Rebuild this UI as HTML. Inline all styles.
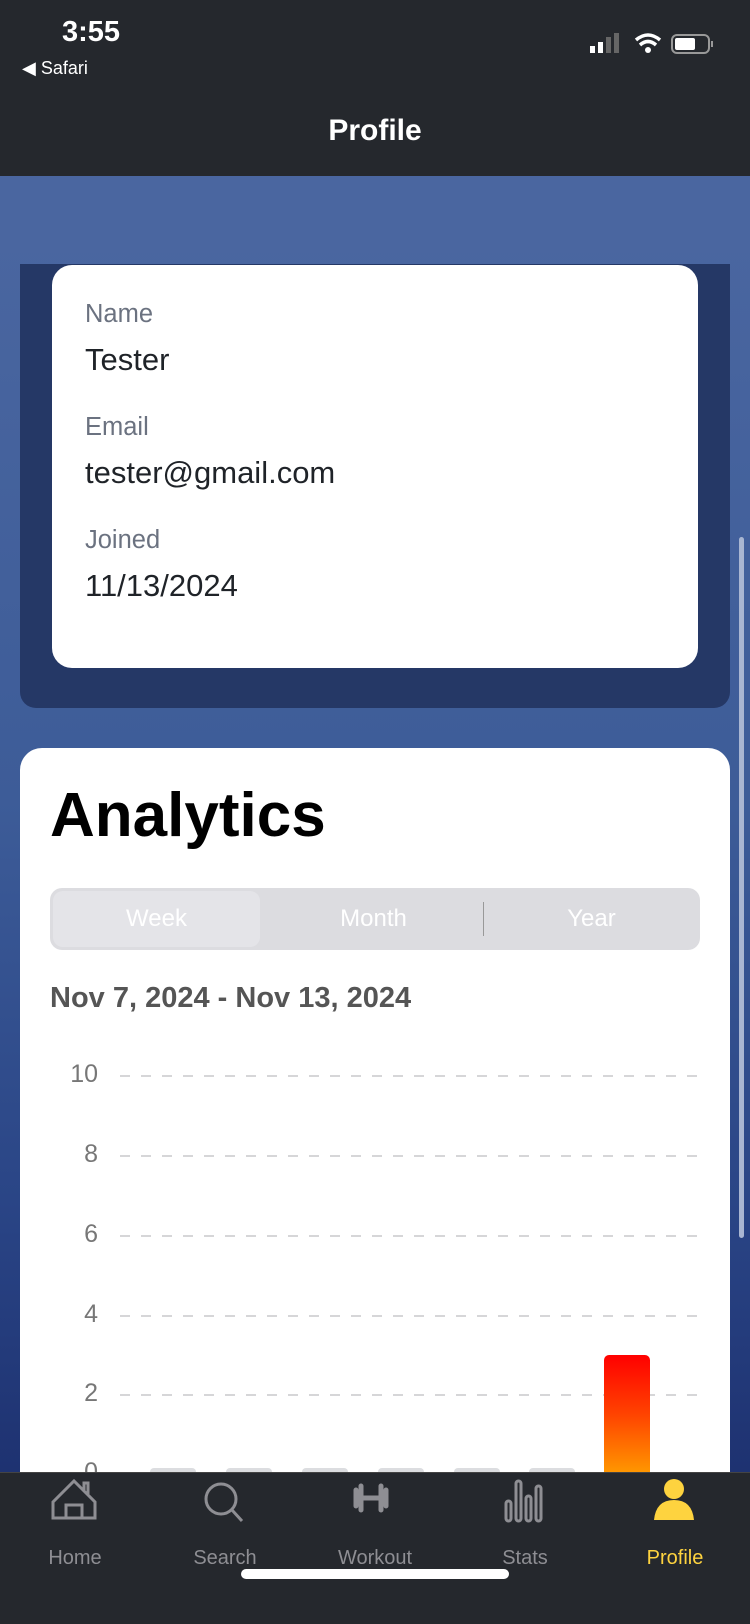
<!DOCTYPE html>
<html><head><meta charset="utf-8"><style>
*{margin:0;padding:0;box-sizing:border-box}
body{width:750px;height:1624px;overflow:hidden;position:relative;font-family:"Liberation Sans",sans-serif;background:linear-gradient(#4b67a0 0px,#4a66a0 230px,#3d5c98 800px,#2a4586 1200px,#1e3271 1470px)}
.abs{position:absolute}
.top{left:0;top:0;width:750px;height:176px;background:#25282d;color:#fff}
.lbl{left:85px;font-size:25.5px;color:#6b7280}
.val{left:85px;font-size:31px;color:#1f2328}
.grid{left:120px;width:584px;height:2px;background:repeating-linear-gradient(90deg,#d6d6d8 0 10px,transparent 10px 21px)}
.yl{width:60px;left:38px;text-align:right;font-size:25px;color:#777}
.stub{width:46px;height:6px;background:#dcdde0;top:1468px;border-radius:4px 4px 0 0}
.tab{top:1472px;width:150px;text-align:center;color:#8e8e93;font-size:20px}
</style></head><body>
<div class="abs top">
 <div class="abs" style="left:62px;top:16px;font-size:29px;font-weight:bold">3:55</div>
 <div class="abs" style="left:22px;top:58px;font-size:18px">◀ Safari</div>
 <svg class="abs" style="left:590px;top:32px" width="130" height="26">
  <rect x="0" y="14" width="5" height="7" fill="#fff"/><rect x="8" y="10" width="5" height="11" fill="#fff"/><rect x="16" y="5" width="5" height="16" fill="#666"/><rect x="24" y="1" width="5" height="20" fill="#666"/>
  <path d="M46 8 Q58 -2 70 8" stroke="#fff" stroke-width="3.5" fill="none"/><path d="M50 13 Q58 6 66 13" stroke="#fff" stroke-width="3.5" fill="none"/><circle cx="58" cy="18" r="3" fill="#fff"/>
  <rect x="82" y="3" width="37" height="18" rx="5" fill="none" stroke="#999" stroke-width="2"/><rect x="85" y="6" width="20" height="12" rx="2" fill="#fff"/><rect x="121" y="9" width="2" height="6" fill="#999"/>
 </svg>
 <div class="abs" style="left:0;width:750px;top:114px;text-align:center;font-size:30px;font-weight:bold">Profile</div>
</div>
<div class="abs" style="left:20px;top:264px;width:710px;height:444px;background:#253866;border-radius:0 0 16px 16px"></div>
<div class="abs" style="left:52px;top:265px;width:646px;height:403px;background:#fff;border-radius:20px"></div>
<div class="abs lbl" style="top:300px">Name</div>
<div class="abs val" style="top:342px">Tester</div>
<div class="abs lbl" style="top:413px">Email</div>
<div class="abs val" style="top:455px">tester@gmail.com</div>
<div class="abs lbl" style="top:526px">Joined</div>
<div class="abs val" style="top:568px">11/13/2024</div>
<div class="abs" style="left:739px;top:537px;width:5px;height:701px;background:#a9b6d2;border-radius:3px"></div>
<div class="abs" style="left:20px;top:748px;width:710px;height:760px;background:#fff;border-radius:22px"></div>
<div class="abs" style="left:50px;top:780px;font-size:62px;font-weight:bold;color:#000">Analytics</div>
<div class="abs" style="left:50px;top:888px;width:650px;height:62px;background:#dcdce0;border-radius:12px"></div>
<div class="abs" style="left:53px;top:891px;width:207px;height:56px;background:#e4e4e8;border-radius:10px"></div>
<div class="abs" style="left:483px;top:902px;width:1px;height:34px;background:#999"></div>
<div class="abs" style="left:53px;width:207px;top:905px;text-align:center;color:#fff;font-size:24px">Week</div>
<div class="abs" style="left:270px;width:207px;top:905px;text-align:center;color:#fff;font-size:24px">Month</div>
<div class="abs" style="left:488px;width:207px;top:905px;text-align:center;color:#fff;font-size:24px">Year</div>
<div class="abs" style="left:50px;top:982px;font-size:29px;font-weight:bold;color:#555">Nov 7, 2024 - Nov 13, 2024</div>
<div class="abs grid" style="top:1075px"></div><div class="abs yl" style="top:1060px">10</div>
<div class="abs grid" style="top:1155px"></div><div class="abs yl" style="top:1140px">8</div>
<div class="abs grid" style="top:1235px"></div><div class="abs yl" style="top:1220px">6</div>
<div class="abs grid" style="top:1315px"></div><div class="abs yl" style="top:1300px">4</div>
<div class="abs grid" style="top:1394px"></div><div class="abs yl" style="top:1379px">2</div>
<div class="abs yl" style="top:1458px">0</div>
<div class="abs stub" style="left:150px"></div><div class="abs stub" style="left:226px"></div><div class="abs stub" style="left:302px"></div><div class="abs stub" style="left:378px"></div><div class="abs stub" style="left:454px"></div><div class="abs stub" style="left:529px"></div>
<div class="abs" style="left:604px;top:1355px;width:46px;height:120px;border-radius:5px 5px 0 0;background:linear-gradient(#ff0000,#ff4400 50%,#ff9a00)"></div>
<div class="abs" style="left:0;top:1472px;width:750px;height:152px;background:#25282d;border-top:1px solid #444"></div>
<svg class="abs" style="left:0;top:1472px" width="750" height="70" fill="none" stroke="#8e8e93" stroke-width="3">
 <path d="M53 46 V30 L74 9 L95 30 V46 Z M66 46 V33 H82 V46 M84 18 V11 H88 V22"/>
 <circle cx="221" cy="27" r="15"/><path d="M232 38 L242 49"/>
 <path d="M356 26 H386 M356 18 V34 M361 14 V38 M381 14 V38 M386 18 V34" stroke-width="5" stroke-linecap="round"/>
 <rect x="506" y="29" width="5" height="20" rx="2.5"/><rect x="516" y="9" width="5" height="40" rx="2.5"/><rect x="526" y="24" width="5" height="25" rx="2.5"/><rect x="536" y="14" width="5" height="35" rx="2.5"/>
 <circle cx="674" cy="17" r="10" fill="#fed33f" stroke="none"/><path d="M654 48 Q656 28 674 28 Q692 28 694 48 Z" fill="#fed33f" stroke="none"/>
</svg>
<div class="abs tab" style="left:0;top:1547px">Home</div>
<div class="abs tab" style="left:150px;top:1547px">Search</div>
<div class="abs tab" style="left:300px;top:1547px">Workout</div>
<div class="abs tab" style="left:450px;top:1547px">Stats</div>
<div class="abs tab" style="left:600px;top:1547px;color:#fed33f">Profile</div>
<div class="abs" style="left:241px;top:1569px;width:268px;height:10px;background:#fff;border-radius:5px"></div>
</body></html>
